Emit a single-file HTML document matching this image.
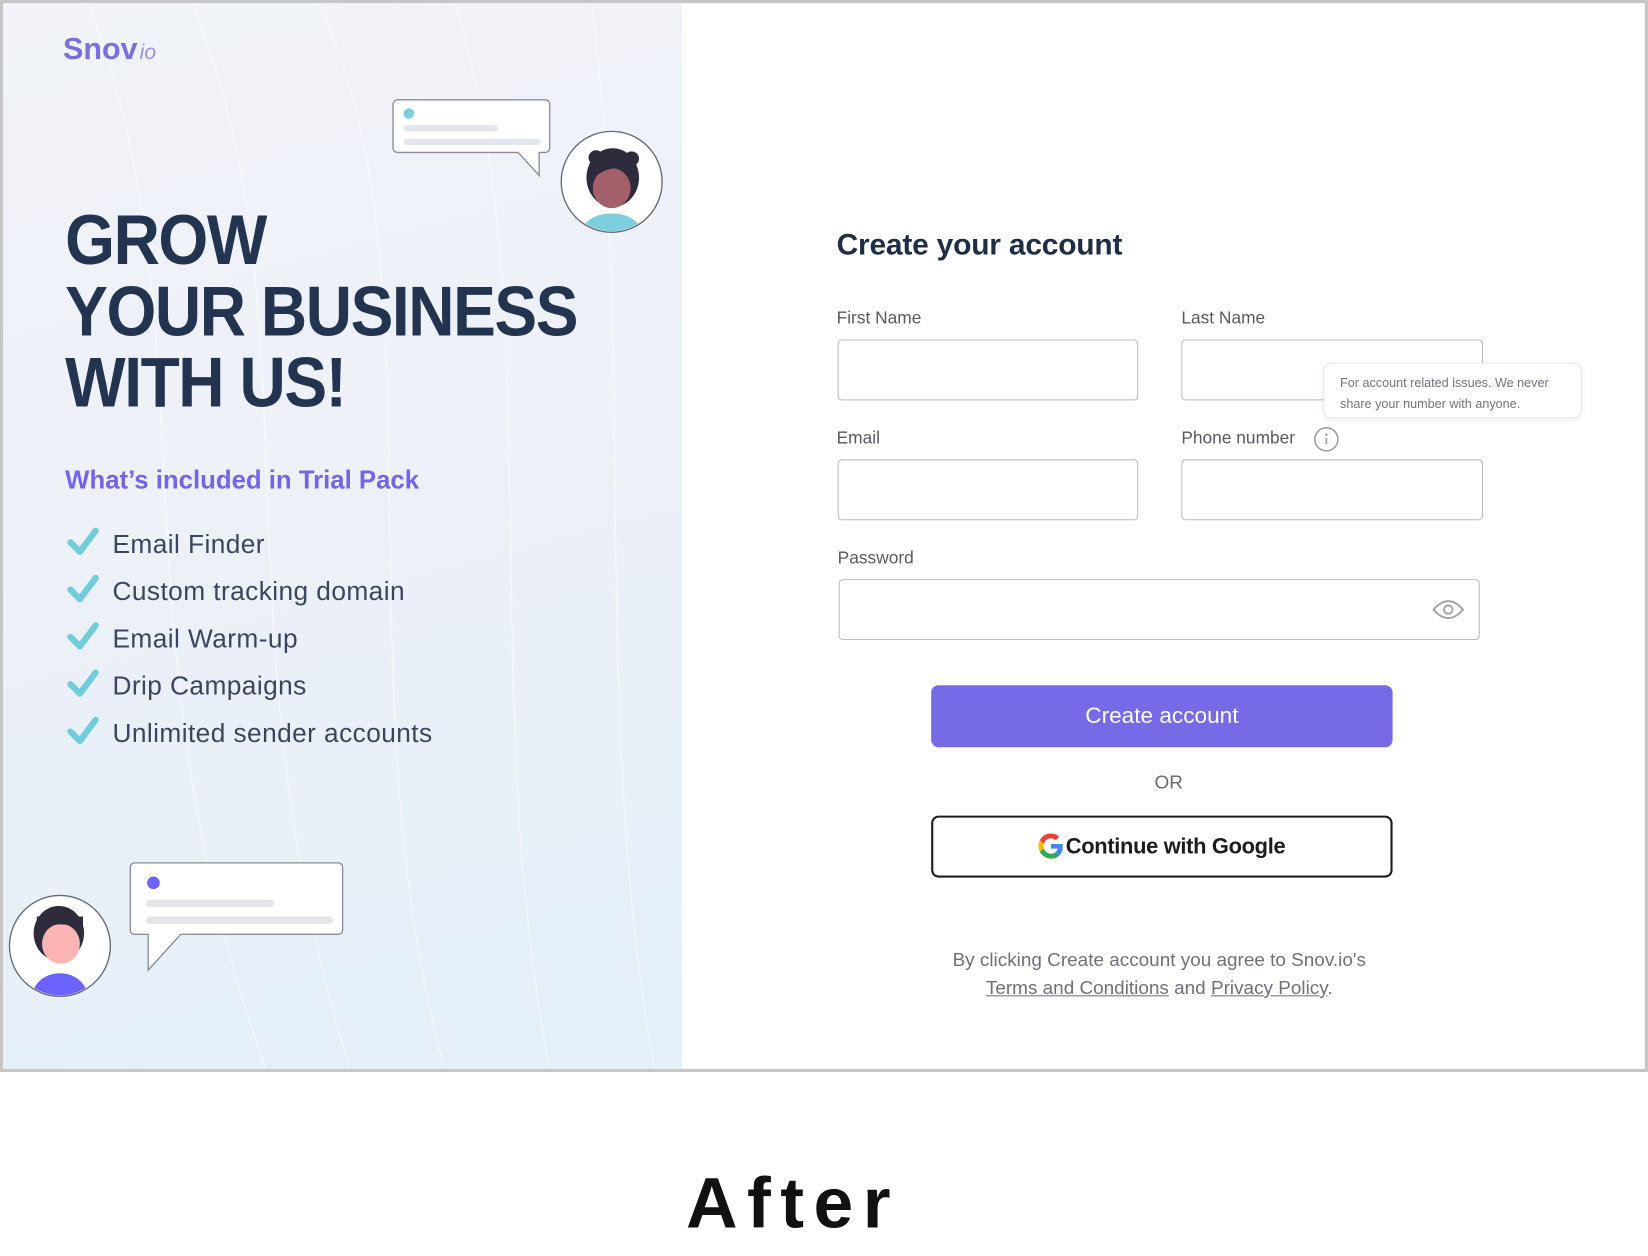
<!DOCTYPE html>
<html><head><meta charset="utf-8"><style>
html,body{margin:0;padding:0;background:#fff;width:1648px;height:1256px;overflow:hidden}
#w{position:absolute;left:0;top:0;width:1568px;height:1195px;transform:scale(1.0510);transform-origin:0 0;font-family:"Liberation Sans",sans-serif}
.a{position:absolute}
#frame{left:0;top:0;width:1562px;height:1014px;border:3px solid #c6c6c6;background:#fff}
#left{left:3px;top:3px;width:646px;height:1014px;background:linear-gradient(165deg,#f1f3f8 0%,#edf1f8 45%,#e4eff8 100%);overflow:hidden}
.h{color:#22344f;font-weight:bold;font-size:67px;letter-spacing:-1.5px;left:59px;white-space:nowrap;transform:scaleX(.91);transform-origin:0 0}
.li{left:104px;font-size:25px;color:#3a4660;letter-spacing:.4px;white-space:nowrap}
.lab{font-size:16.5px;color:#555a63}
.inp{border:1px solid #b9bcc2;border-radius:4px;background:#fff;box-sizing:border-box;height:58px}
</style></head><body><div id="w">
<div class="a" id="frame"></div>
<div class="a" id="left">
<svg class="a" style="left:0;top:0" width="646" height="1014"><g fill="none" stroke="#fff" stroke-opacity=".55" stroke-width="1.2">
<path d="M80 0 C200 300 100 600 250 1014"/><path d="M180 0 C300 300 200 600 330 1014"/><path d="M300 0 C420 250 320 650 420 1014"/><path d="M430 0 C520 300 450 650 520 1014"/><path d="M560 0 C600 300 560 700 620 1014"/></g></svg>
<div class="a" style="left:57px;top:28px;font-size:29px;font-weight:bold;color:#7a6fe0">Snov<span style="font-size:20px;font-style:italic;font-weight:normal;color:#9a90e8;margin-left:2px">io</span></div>
<svg class="a" style="left:368px;top:90px" width="270" height="130">
<path d="M3 6 a4 4 0 0 1 4-4 h141 a4 4 0 0 1 4 4 v42 a4 4 0 0 1-4 4 h-6 v22 l-20-22 h-115 a4 4 0 0 1-4-4z" fill="#fff" stroke="#8a8d99" stroke-width="1.3"/>
<circle cx="18" cy="15" r="5" fill="#7ccfdc"/><rect x="13" y="26" width="90" height="6" rx="3" fill="#e3e8ef"/><rect x="13" y="39" width="130" height="6" rx="3" fill="#e3e8ef"/>
<circle cx="211" cy="80" r="48" fill="#fff" stroke="#666a78" stroke-width="1.3"/>
<clipPath id="c1"><circle cx="211" cy="80" r="47"/></clipPath>
<g clip-path="url(#c1)"><ellipse cx="211" cy="128" rx="28" ry="18" fill="#7ccfdc"/><circle cx="196" cy="57" r="7" fill="#2e2b3d"/><circle cx="230" cy="58" r="7" fill="#2e2b3d"/><ellipse cx="212" cy="76" rx="25" ry="28" fill="#2e2b3d"/><ellipse cx="211" cy="86" rx="18" ry="19" fill="#a3606a"/><path d="M192 78 q18-18 40-6 v-14 h-40z" fill="#2e2b3d"/></g>
</svg>
<div class="a h" style="top:187px">GROW</div>
<div class="a h" style="top:255px">YOUR BUSINESS</div>
<div class="a h" style="top:323px">WITH US!</div>
<div class="a" style="left:59px;top:441px;font-size:24.5px;font-weight:bold;color:#7563ea">What’s included in Trial Pack</div>
<svg class="a" style="left:58px;top:497px" width="36" height="220"><g fill="none" stroke="#72ccda" stroke-width="6" stroke-linecap="round" stroke-linejoin="round">
<path d="M6 16 l9 9 l15-20"/><path d="M6 61 l9 9 l15-20"/><path d="M6 106 l9 9 l15-20"/><path d="M6 151 l9 9 l15-20"/><path d="M6 196 l9 9 l15-20"/></g></svg>
<div class="a li" style="top:501px">Email Finder</div>
<div class="a li" style="top:546px">Custom tracking domain</div>
<div class="a li" style="top:591px">Email Warm-up</div>
<div class="a li" style="top:636px">Drip Campaigns</div>
<div class="a li" style="top:681px">Unlimited sender accounts</div>
<svg class="a" style="left:0;top:815px" width="340" height="140">
<path d="M121 7 a4 4 0 0 1 4-4 h194 a4 4 0 0 1 4 4 v60 a4 4 0 0 1-4 4 h-150 l-31 34 v-34 h-13 a4 4 0 0 1-4-4z" fill="#fff" stroke="#8a8d99" stroke-width="1.3"/>
<circle cx="143" cy="22" r="6" fill="#6c63ff"/><rect x="136" y="38" width="122" height="7" rx="3.5" fill="#e5e5e7"/><rect x="136" y="54" width="178" height="7" rx="3.5" fill="#e5e5e7"/>
<circle cx="54" cy="82" r="48" fill="#fff" stroke="#666a78" stroke-width="1.3"/>
<clipPath id="c2"><circle cx="54" cy="82" r="47"/></clipPath>
<g clip-path="url(#c2)"><ellipse cx="54" cy="130" rx="26" ry="22" fill="#6c63ff"/><ellipse cx="53" cy="70" rx="24" ry="26" fill="#2e2b3d"/><ellipse cx="55" cy="80" rx="18" ry="19" fill="#fdb4b4"/><path d="M32 70 q20-16 44-2 v-14 h-44z" fill="#2e2b3d"/></g>
</svg>
</div>
<div class="a" style="left:796px;top:217px;font-size:28.5px;font-weight:bold;color:#1f2d45;letter-spacing:-.2px">Create your account</div>
<div class="a lab" style="left:796px;top:294px">First Name</div>
<div class="a lab" style="left:1124px;top:294px">Last Name</div>
<div class="a inp" style="left:797px;top:323px;width:286px"></div>
<div class="a inp" style="left:1124px;top:323px;width:287px"></div>
<div class="a lab" style="left:796px;top:408px">Email</div>
<div class="a lab" style="left:1124px;top:408px">Phone number</div>
<svg class="a" style="left:1249px;top:406px" width="26" height="26"><circle cx="13" cy="12" r="11" fill="none" stroke="#9a9da3" stroke-width="1.5"/><circle cx="13" cy="7.5" r="1.2" fill="#9a9da3"/><path d="M13 10.5v6" stroke="#9a9da3" stroke-width="1.6"/></svg>
<div class="a inp" style="left:797px;top:437px;width:286px"></div>
<div class="a inp" style="left:1124px;top:437px;width:287px"></div>
<div class="a" style="left:1259px;top:345px;width:246px;height:53px;box-sizing:border-box;background:#fff;border:1px solid #e3e7ee;border-radius:8px;box-shadow:0 2px 6px rgba(0,0,0,.06);padding:8px 0 0 15px;font-size:12px;line-height:20px;color:#6e7480">For account related issues. We never<br>share your number with anyone.</div>
<div class="a lab" style="left:797px;top:522px">Password</div>
<div class="a inp" style="left:798px;top:551px;width:610px"></div>
<svg class="a" style="left:1362px;top:568px" width="32" height="24"><path d="M2 12 Q16 -4 30 12 Q16 28 2 12z" fill="none" stroke="#a0a3a8" stroke-width="1.8"/><circle cx="16" cy="12" r="4" fill="none" stroke="#a0a3a8" stroke-width="1.8"/></svg>
<div class="a" style="left:886px;top:652px;width:439px;height:59px;background:#766ae6;border-radius:7px;color:#fff;font-size:21.5px;line-height:59px;text-align:center">Create account</div>
<div class="a" style="left:1062px;top:734px;width:100px;text-align:center;font-size:18px;color:#666a70">OR</div>
<div class="a" style="left:886px;top:776px;width:439px;height:59px;box-sizing:border-box;border:2px solid #1c1c1c;border-radius:7px;font-size:20.8px;font-weight:bold;line-height:55px;text-align:center;color:#1c1c1c;letter-spacing:-.3px"><svg width="24" height="24" viewBox="0 0 48 48" style="vertical-align:-5px;margin-right:2px"><path fill="#EA4335" d="M24 9.5c3.5 0 6.6 1.2 9 3.5l6.7-6.7C35.6 2.4 30.2 0 24 0 14.6 0 6.6 5.4 2.7 13.2l7.8 6C12.4 13.7 17.7 9.5 24 9.5z"/><path fill="#4285F4" d="M46.5 24.5c0-1.6-.1-3.1-.4-4.5H24v9h12.7c-.6 3-2.3 5.5-4.8 7.2l7.6 5.9c4.4-4.1 7-10.1 7-17.6z"/><path fill="#FBBC05" d="M10.5 28.7c-.5-1.5-.8-3-.8-4.7s.3-3.2.8-4.7l-7.8-6C1 16.6 0 20.2 0 24s1 7.4 2.7 10.7l7.8-6z"/><path fill="#34A853" d="M24 48c6.5 0 11.900-2.1 15.9-5.8l-7.6-5.9c-2.1 1.4-4.9 2.3-8.3 2.3-6.3 0-11.6-4.2-13.5-9.9l-7.8 6C6.6 42.6 14.6 48 24 48z"/></svg>Continue with Google</div>
<div class="a" style="left:803px;top:900px;width:600px;text-align:center;font-size:18px;line-height:27px;color:#6c717b">By clicking Create account you agree to Snov.io's<br><u>Terms and Conditions</u> and <u>Privacy Policy</u>.</div>
<div class="a" style="left:540px;top:1106px;width:420px;text-align:center;font-size:68px;font-weight:bold;letter-spacing:9px;color:#111;padding-left:9px;box-sizing:border-box">After</div>
</div></body></html>
